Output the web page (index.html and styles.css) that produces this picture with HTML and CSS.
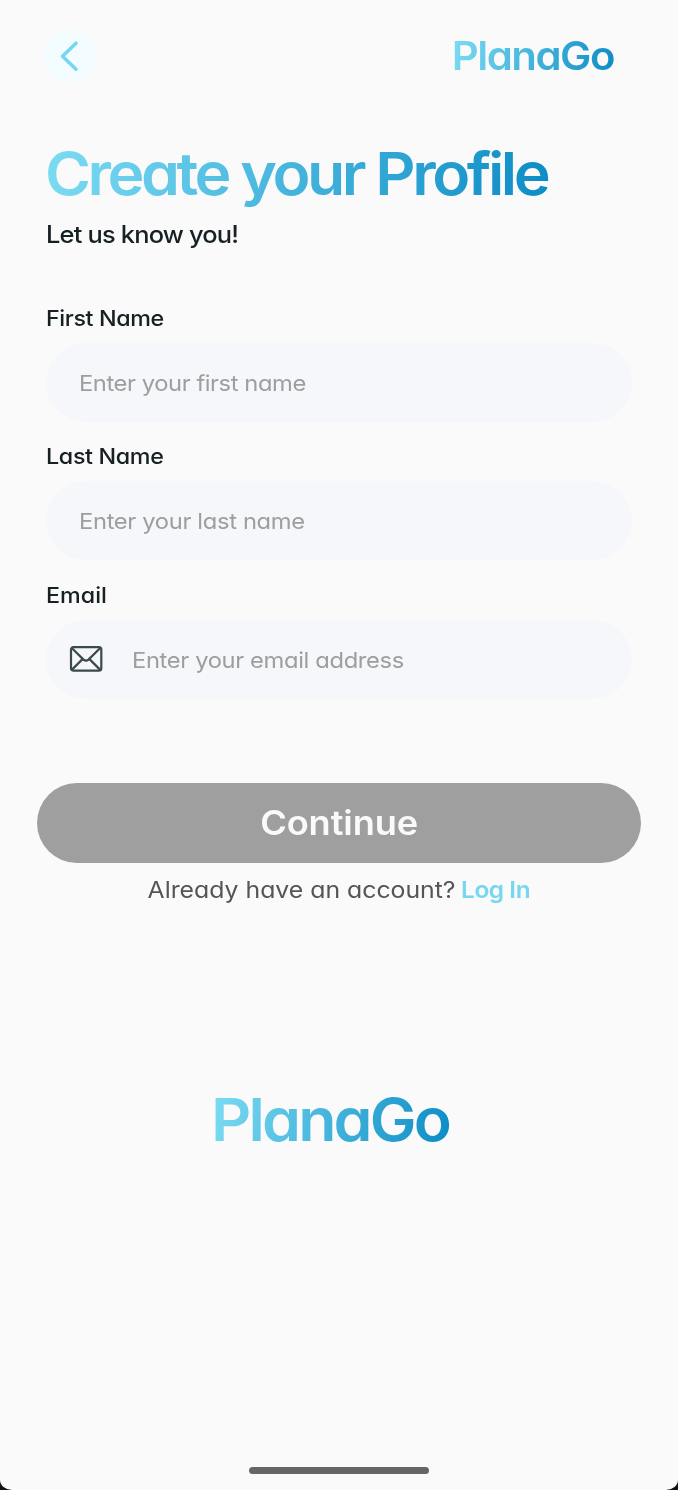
FILE: index.html
```html
<!DOCTYPE html>
<html lang="en">
<head>
<meta charset="utf-8">
<title>PlanaGo – Create your Profile</title>
<link rel="stylesheet" href="styles.css">
</head>
<body>
<main class="screen">
  <header class="topbar">
    <button class="back" aria-label="Back">
      <svg width="52" height="52" viewBox="0 0 52 52"><path d="M24.5 13.5 11 26.5l13.5 13" transform="translate(7.5 -.3)" fill="none" stroke="#77d7f0" stroke-width="3.6" stroke-linecap="round" stroke-linejoin="round"/></svg>
    </button>
    <span class="brand brand-small">PlanaGo</span>
  </header>
  <h1 class="title"><span class="title-text">Create your Profile</span></h1>
  <p class="subtitle">Let us know you!</p>
  <form class="form">
    <div class="group">
      <div class="label label-first">First Name</div>
      <div class="field"><span class="hint hint-first">Enter your first name</span></div>
    </div>
    <div class="group">
      <div class="label label-last">Last Name</div>
      <div class="field"><span class="hint hint-last">Enter your last name</span></div>
    </div>
    <div class="group">
      <div class="label label-email">Email</div>
      <div class="field field-icon">
        <svg class="mail" width="34" height="28" viewBox="0 0 34 28" fill="none" stroke="#3c4a4c" stroke-width="2.2" stroke-linejoin="round"><rect x="2" y="2.1" width="30.3" height="23.6" rx="2.5"/><path d="m3 3.3 11.5 11.3q2.5 2.2 5 0L31 3.3M3 24.6l10.5-10.5M31 24.6 20.5 14.1"/></svg>
        <span class="hint hint-email">Enter your email address</span>
      </div>
    </div>
  </form>
  <button class="continue"><span class="continue-text">Continue</span></button>
  <p class="login"><span class="login-text">Already have an account?</span><a class="login-link">Log In</a></p>
  <div class="footer-brand"><span class="brand brand-large">PlanaGo</span></div>
  <div class="home-bar"></div>
</main>
</body>
</html>
```
FILE: styles.css
```css
* { box-sizing: border-box; }
html { background: #111; }
body {
  margin: 0;
  font-family: Inter, "Open Sans", sans-serif;
  font-feature-settings: "cv11";
  color: #172022;
}
button { border: 0; padding: 0; font: inherit; font-feature-settings: inherit; }
p, h1 { margin: 0; }
.screen {
  display: flex;
  flex-direction: column;
  height: 1490px;
  padding: 30px 46px 0;
  background: #fafafa;
  border-radius: 0 0 12px 12px / 0 0 10px 10px;
  white-space: nowrap;
}
.topbar {
  display: flex;
  justify-content: space-between;
  height: 52px;
  padding-right: 18px;
}
.back {
  width: 52px;
  height: 52px;
  margin-left: -2px;
  border-radius: 50%;
  background: #f3fcff;
}
.back svg { display: block; }
.brand, .title-text {
  display: inline-block;
  color: transparent;
  background: linear-gradient(100deg, #7ddcf3, #0b8bc5);
  -webkit-background-clip: text;
  background-clip: text;
  font-weight: 600;
  transform: scaleX(1.06);
  transform-origin: left;
}
.brand-small {
  font-size: 39.5px;
  line-height: 52px;
  letter-spacing: -1.4px;
  padding-right: 2px;
  margin-right: -2px;
  transform-origin: right;
}
.title {
  height: 75px;
  margin-top: 56px;
  font-size: 59px;
  line-height: 72px;
}
.title-text {
  letter-spacing: -3.3px;
  padding-right: 4px;
  margin-left: -1.5px;
}
.subtitle {
  margin-top: 6px;
  font-size: 24px;
  line-height: 32px;
  font-weight: 450;
  letter-spacing: -.78px;
  transform: scaleX(1.06);
  transform-origin: left;
}
.form {
  display: flex;
  flex-direction: column;
  gap: 19.5px;
  margin-top: 51.5px;
}
.label {
  height: 40px;
  font-size: 22px;
  line-height: 30px;
  font-weight: 480;
  transform: scaleX(1.06);
  transform-origin: left;
}
.label-first { letter-spacing: -.38px; }
.label-last { letter-spacing: -.34px; }
.label-email { letter-spacing: 0; }
.field {
  display: flex;
  align-items: center;
  height: 79px;
  padding-left: 33px;
  border-radius: 40px;
  background: #f5f7fb;
}
.field-icon { padding-left: 23px; gap: 29px; }
.hint {
  font-size: 22px;
  line-height: 28px;
  padding-top: 1px;
  color: #9e9e9e;
  font-weight: 400;
  transform: scaleX(1.08);
  transform-origin: left;
}
.hint-first { letter-spacing: -.4px; }
.hint-last { letter-spacing: -.32px; }
.hint-email { letter-spacing: -.34px; }
.continue {
  flex: none;
  height: 80.5px;
  margin: 84px -9px 0;
  border-radius: 41px;
  background: #9f9f9f;
  color: #fafafa;
  font-size: 33.5px;
  font-weight: 600;
}
.continue-text {
  display: inline-block;
  letter-spacing: -.1px;
  transform: scaleX(1.08);
}
.login {
  display: flex;
  justify-content: center;
  gap: 19.5px;
  margin-top: 11px;
  padding-left: 9.5px;
  font-size: 23px;
  line-height: 32px;
  color: #555;
}
.login-text {
  font-weight: 380;
  letter-spacing: -.02px;
  transform: scaleX(1.08);
}
.login-link {
  color: #77d7f0;
  font-weight: 600;
  letter-spacing: -.4px;
  transform: scaleX(1.06);
}
.footer-brand {
  display: flex;
  padding-left: 164.5px;
  margin-top: 177.5px;
}
.brand-large {
  font-size: 59px;
  line-height: 72px;
  letter-spacing: -2.7px;
  padding-right: 3px;
}
.home-bar {
  width: 180px;
  height: 6.5px;
  margin: auto auto 16.5px;
  border-radius: 4px;
  background: #666;
}
```
